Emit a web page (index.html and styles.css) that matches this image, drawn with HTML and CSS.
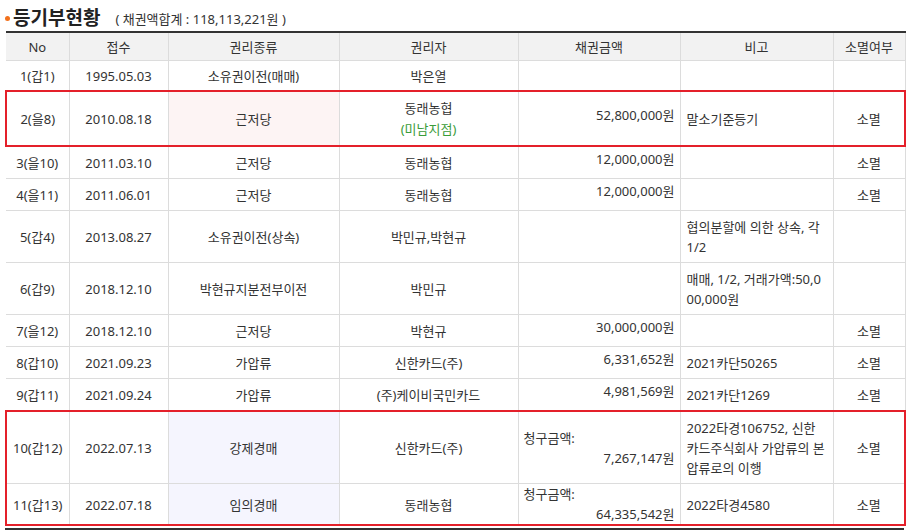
FILE: index.html
```html
<!DOCTYPE html>
<html lang="ko">
<head>
<meta charset="utf-8">
<title>등기부현황</title>
<link rel="stylesheet" href="styles.css">
</head>
<body>
<div class="wrap">
  <div class="title">
    <span class="dot"></span>
    <h2 class="title-text">등기부현황</h2>
    <span class="sum">( 채권액합계 : 118,113,221원 )</span>
  </div>
  <table class="reg">
    <colgroup>
      <col class="c-no"><col class="c-date"><col class="c-kind"><col class="c-owner"><col class="c-amt"><col class="c-note"><col class="c-ext">
    </colgroup>
    <thead>
      <tr>
        <th>No</th><th>접수</th><th>권리종류</th><th>권리자</th><th>채권금액</th><th>비고</th><th>소멸여부</th>
      </tr>
    </thead>
    <tbody>
      <tr>
        <td>1(갑1)</td><td>1995.05.03</td><td>소유권이전(매매)</td><td>박은열</td><td class="amt"></td><td class="note"></td><td></td>
      </tr>
      <tr class="box-one">
        <td>2(을8)</td><td>2010.08.18</td><td class="pink">근저당</td><td class="owner2">동래농협<div class="branch">(미남지점)</div></td><td class="amt">52,800,000원</td><td class="note">말소기준등기</td><td>소멸</td>
      </tr>
      <tr>
        <td>3(을10)</td><td>2011.03.10</td><td>근저당</td><td>동래농협</td><td class="amt">12,000,000원</td><td class="note"></td><td>소멸</td>
      </tr>
      <tr>
        <td>4(을11)</td><td>2011.06.01</td><td>근저당</td><td>동래농협</td><td class="amt">12,000,000원</td><td class="note"></td><td>소멸</td>
      </tr>
      <tr>
        <td>5(갑4)</td><td>2013.08.27</td><td>소유권이전(상속)</td><td>박민규,박현규</td><td class="amt"></td><td class="note">협의분할에 의한 상속, 각<br>1/2</td><td></td>
      </tr>
      <tr>
        <td>6(갑9)</td><td>2018.12.10</td><td>박현규지분전부이전</td><td>박민규</td><td class="amt"></td><td class="note">매매, 1/2, 거래가액:50,0<br>00,000원</td><td></td>
      </tr>
      <tr>
        <td>7(을12)</td><td>2018.12.10</td><td>근저당</td><td>박현규</td><td class="amt">30,000,000원</td><td class="note"></td><td>소멸</td>
      </tr>
      <tr>
        <td>8(갑10)</td><td>2021.09.23</td><td>가압류</td><td>신한카드(주)</td><td class="amt">6,331,652원</td><td class="note">2021카단50265</td><td>소멸</td>
      </tr>
      <tr>
        <td>9(갑11)</td><td>2021.09.24</td><td>가압류</td><td>(주)케이비국민카드</td><td class="amt">4,981,569원</td><td class="note">2021카단1269</td><td>소멸</td>
      </tr>
      <tr class="box-top">
        <td>10(갑12)</td><td>2022.07.13</td><td class="lav">강제경매</td><td>신한카드(주)</td><td class="claim"><div class="claim-label">청구금액:</div><div class="claim-val">7,267,147원</div></td><td class="note">2022타경106752, 신한<br>카드주식회사 가압류의 본<br>압류로의 이행</td><td>소멸</td>
      </tr>
      <tr class="box-bottom">
        <td>11(갑13)</td><td>2022.07.18</td><td class="lav">임의경매</td><td>동래농협</td><td class="claim"><div class="claim-label">청구금액:</div><div class="claim-val">64,335,542원</div></td><td class="note">2022타경4580</td><td>소멸</td>
      </tr>
    </tbody>
  </table>
  <div class="endline"></div>
</div>
</body>
</html>
```

FILE: styles.css
```css
html, body {
  margin: 0;
  padding: 0;
  background: #fff;
}
body {
  font-family: "Noto Sans", "Noto Sans CJK KR", sans-serif;
  font-size: 13px;
  color: #333;
}
.wrap {
  padding: 3px 5px 0 5px;
}
.title {
  display: flex;
  align-items: center;
  height: 28px;
}
.dot {
  width: 5px;
  height: 5px;
  border-radius: 50%;
  background: #f2711c;
  margin: 2px 3px 0 0;
}
.title-text {
  margin: 0;
  font-family: "Noto Sans CJK KR", sans-serif;
  font-size: 19px;
  font-weight: 700;
  color: #222;
  line-height: 22px;
}
.sum {
  margin-left: 15px;
  margin-top: 3px;
  font-size: 13px;
  color: #333;
}
.reg {
  width: 899px;
  table-layout: fixed;
  border-collapse: collapse;
  border-spacing: 0;
}
.c-no { width: 63px; }
.c-date { width: 99px; }
.c-kind { width: 171px; }
.c-owner { width: 179px; }
.c-amt { width: 162px; }
.c-note { width: 153px; }
.c-ext { width: 72px; }
.reg th {
  background: #f2f2f2;
  font-weight: 400;
  color: #333;
  line-height: 20px;
  padding: 4px 5px 3px;
  border-top: 2px solid #333;
  border-bottom: 1px solid #dcdcdc;
  border-left: 1px solid #dcdcdc;
  text-align: center;
}
.reg th:first-child, .reg td:first-child {
  border-left: none;
}
.reg th:last-child, .reg td:last-child {
  border-right: 1px solid #dcdcdc;
}
.reg td {
  line-height: 20px;
  padding: 5px 5px 4px;
  border-bottom: 1px solid #dcdcdc;
  border-left: 1px solid #dcdcdc;
  text-align: center;
  vertical-align: middle;
  white-space: nowrap;
}
.reg td.amt {
  text-align: right;
  padding: 2px 5px 9px;
}
.reg td.note {
  text-align: left;
  padding: 6px 5px 5px 6px;
}
.reg td.owner2 {
  padding: 6px 5px 5px;
}
.reg td.claim {
  padding: 0 5px;
}
.claim-label {
  text-align: left;
}
.claim-val {
  text-align: right;
}
.branch {
  color: #3a9c3a;
  line-height: 22px;
}
.reg td.pink {
  background: #fdf4f4;
}
.reg td.lav {
  background: #f5f5fe;
}
.box-one td, .box-top td {
  border-top: 2px solid #e4202a;
}
.box-one td, .box-bottom td {
  border-bottom: 2px solid #e4202a;
}
.reg .box-one td:first-child, .reg .box-top td:first-child, .reg .box-bottom td:first-child {
  border-left: 2px solid #e4202a;
}
.reg .box-one td:last-child, .reg .box-top td:last-child, .reg .box-bottom td:last-child {
  border-right: 2px solid #e4202a;
}
.endline {
  width: 899px;
  margin-top: 2px;
  border-top: 2px solid #333;
}
```
